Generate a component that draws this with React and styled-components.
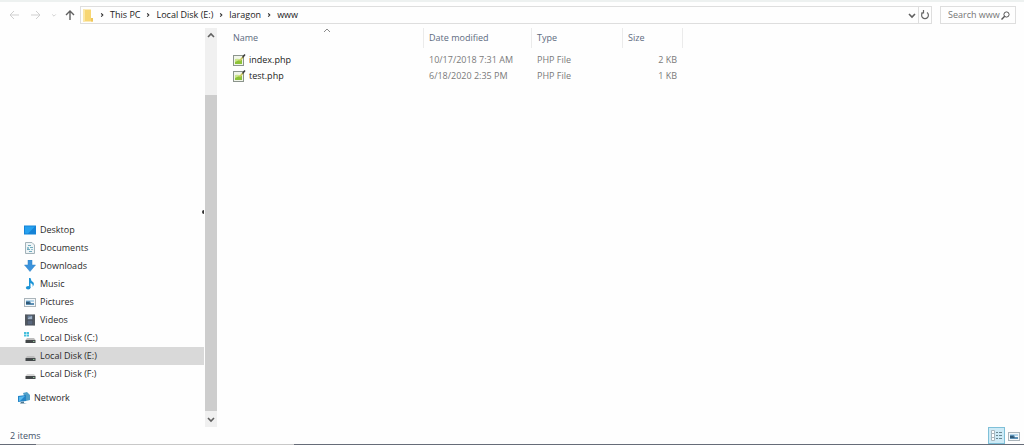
import React, { useState } from "react";
import styled, { createGlobalStyle } from "styled-components";

const GlobalStyle = createGlobalStyle`
  * {
    box-sizing: border-box;
  }

  body {
    margin: 0;
    background: #fefefe;
    color: #2b2b2b;
    font-family: "Open Sans", "Noto Sans", sans-serif;
    font-size: 9px;
    line-height: 16px;
  }

  button,
  input {
    font: inherit;
    color: inherit;
  }

  svg {
    display: block;
    flex: none;
  }
`;

const Window = styled.div`
  display: flex;
  flex-direction: column;
  height: 100vh;
  min-height: 320px;
  border-top: 2px solid #edf1f0;
  overflow: hidden;
`;

const Toolbar = styled.header`
  display: flex;
  align-items: center;
  height: 26px;
  padding: 0 8px;
`;

const IconButton = styled.button`
  display: flex;
  align-items: center;
  justify-content: center;
  width: 12px;
  height: 16px;
  padding: 0;
  border: none;
  background: transparent;
  color: ${(props) => (props.$faded ? "#cfcfcf" : "#606060")};
`;

const NavButtons = styled.nav`
  display: flex;
  gap: 10px;
  width: 72px;

  & button:nth-child(3) {
    margin: 0 -6px 0 -4px;
  }
`;

const AddressBar = styled.div`
  display: flex;
  align-items: center;
  flex: 1;
  height: 18px;
  padding-left: 2px;
  border: 1px solid #dedede;
`;

const Crumbs = styled.ol`
  display: flex;
  flex: 1;
  margin: 0 0 0 1px;
  padding: 0;
  list-style: none;

  & li {
    display: flex;
    align-items: center;
  }

  & svg {
    margin: 0 4px;
  }

  & a {
    color: #222;
    text-decoration: none;
  }
`;

const Refresh = styled.div`
  border-left: 1px solid #dedede;
`;

const SearchBox = styled.label`
  display: flex;
  align-items: center;
  width: 76px;
  height: 18px;
  margin-left: 8px;
  padding: 0 5px 0 7px;
  border: 1px solid #dedede;

  & input {
    flex: 1;
    min-width: 0;
    height: 16px;
    padding: 0;
    border: none;
    outline: none;
    background: transparent;
  }

  & input::placeholder {
    color: #757575;
    opacity: 1;
  }
`;

const Main = styled.div`
  display: flex;
  flex: 1;
  min-height: 0;
`;

const Sidebar = styled.nav`
  display: flex;
  flex-direction: column;
  justify-content: flex-end;
  width: 204px;
  padding-bottom: 20px;
  overflow: hidden;
`;

const Speck = styled.span`
  align-self: flex-end;
  width: 2px;
  height: 4px;
  margin-bottom: 7px;
  border-radius: 2px 0 0 2px;
  background: #333;
`;

const Place = styled.a`
  display: flex;
  align-items: center;
  gap: 4px;
  height: 18px;
  margin-top: ${(props) => (props.$top ? 6 : 0)}px;
  padding-left: ${(props) => (props.$top ? 18 : 24)}px;
  background: ${(props) => (props.$active ? "#d9d9d9" : "transparent")};
  color: #2b2b2b;
  text-decoration: none;
  white-space: nowrap;
`;

const Scrollbar = styled.div`
  display: flex;
  flex-direction: column;
  width: 12px;
  margin-left: 1px;
  background: #f0f0f0;
`;

const Thumb = styled.div`
  flex: 1;
  margin-top: 51px;
  background: #cdcdcd;
`;

const Files = styled.main`
  flex: 1;
  min-width: 0;
  padding-left: 13px;
`;

const Table = styled.table`
  width: 453px;
  table-layout: fixed;
  border-collapse: separate;
  border-spacing: 0;
`;

const HeadCell = styled.th`
  position: relative;
  width: ${(props) => props.$width}px;
  height: 20px;
  padding: 0 0 0 ${(props) => (props.$first ? 3 : 5)}px;
  border-right: 1px solid #ebebeb;
  color: #5d6b80;
  font-weight: 400;
  text-align: left;

  & svg {
    position: absolute;
    top: 0;
    left: 50%;
    transform: translateX(-50%);
    color: #8a8a8a;
  }
`;

const Cell = styled.td`
  height: 16px;
  padding: 0 6px 0 5px;
  color: #7a7a7a;
  text-align: ${(props) => (props.$right ? "right" : "left")};
  white-space: nowrap;

  tr:first-child > & {
    height: 20px;
    padding-top: 4px;
  }
`;

const FileName = styled.div`
  display: flex;
  align-items: center;
  gap: 3px;
  margin-left: -2px;
  color: #222;
`;

const StatusBar = styled.footer`
  display: flex;
  align-items: center;
  justify-content: space-between;
  height: 17px;
  padding: 0 2px 0 10px;
  color: #45536b;
`;

const Views = styled.div`
  display: flex;
`;

const ViewButton = styled.button`
  display: flex;
  align-items: center;
  justify-content: center;
  width: 17px;
  height: 17px;
  padding: 0;
  border: 1px solid ${(props) => (props.$active ? "#7fc0d8" : "transparent")};
  background: ${(props) => (props.$active ? "#cdeaf6" : "transparent")};
`;

const BottomEdge = styled.div`
  display: flex;
  height: 1px;
  background: #666c78;

  &::before {
    content: "";
    width: 258px;
    margin-left: 36px;
    background: #c8c8c8;
  }
`;

const paths = {
  left: "M10 5H1M5 1L1 5L5 9",
  right: "M0 5H9M5 1L9 5L5 9",
  up: "M5 10V1M1 5L5 1L9 5",
  next: "M4 3L6 5L4 7",
  down: "M2 4L5 7L8 4",
  above: "M2 6L5 3L8 6",
  sort: "M2 4L5 1L8 4",
};

function Line({ name, width = 1, size = 10 }) {
  return (
    <svg width={size} height={size} viewBox="0 0 10 10" fill="none">
      <path d={paths[name]} stroke="currentColor" strokeWidth={width} />
    </svg>
  );
}

function FolderIcon() {
  return (
    <svg width="10" height="13" viewBox="0 0 10 13">
      <path d="M0 .5H8V9H10V12.5H0Z" fill="#f7d673" />
      <path d="M0 .5H2V12.5H0Z" fill="#fbe7a6" />
      <path d="M8 9H10V12.5H8Z" fill="#efc65a" />
    </svg>
  );
}

function PhpIcon() {
  return (
    <svg width="13" height="13" viewBox="0 0 13 13">
      <rect x=".5" y="1.5" width="10" height="10" fill="#f1f5ea" stroke="#8b948c" />
      <path d="M2 5Q5 4 9 6V10H2Z" fill="#cbe58c" />
      <path d="M2 8Q5 6 9 6V10H2Z" fill="#8cc238" />
      <path d="M6.5 7L10 3" stroke="#c9c65a" strokeWidth="1.6" />
      <path d="M9.5 3.5L12 .5" stroke="#3d3d3d" strokeWidth="1.5" />
    </svg>
  );
}

function DiskBody({ light }) {
  return (
    <>
      <path d="M3 6H10L11.5 8H1.5Z" fill={light ? "#d6d6d6" : "#bdbdbd"} />
      <path d="M1.5 8H11.5V11H1.5Z" fill="#44484a" />
      <path d="M9 9.5H10.5" stroke="#8fbf97" />
    </>
  );
}

const drawings = {
  desktop: (
    <>
      <rect y="1.5" width="12" height="9" fill="#1583d6" />
      <path d="M1 2.5H11L4 9.5H1Z" fill="#27a1ef" />
    </>
  ),
  documents: (
    <>
      <path d="M1.5 .5H8L10.5 3V11.5H1.5Z" fill="#eef4f6" stroke="#a3b2b9" />
      <path d="M4 3.5H7M6 5.5H9M3 7.5H6M5 9.5H8" stroke="#6faabd" />
      <path d="M3 5H5V7H3ZM7 7H9V8H7Z" fill="#8fc1cf" />
    </>
  ),
  downloads: (
    <path d="M4 0H8V5H11.5L6 11.5L.5 5H4Z" fill="#3a92dc" stroke="#2f80c6" strokeWidth=".5" />
  ),
  music: (
    <>
      <path d="M5 0H6.5Q7 3 9 4Q11 6 8.5 9Q9.5 6 6.5 5V10H5Z" fill="#1b93d6" />
      <ellipse cx="4.2" cy="9.7" rx="2.3" ry="1.8" fill="#1b93d6" />
    </>
  ),
  pictures: (
    <>
      <rect x=".5" y="2.5" width="11" height="8" fill="#f4f8fa" stroke="#aab4ba" />
      <path d="M2 4H10V6H2Z" fill="#b5d6ea" />
      <path d="M2 5H6L7 7H10V9H2Z" fill="#5c8fb5" />
      <path d="M2 6H5L7 8H2Z" fill="#2f5977" />
    </>
  ),
  videos: (
    <>
      <rect x="1" y=".5" width="10" height="11" fill="#454b52" />
      <path d="M2 .5V11.5M10 .5V11.5" stroke="#7d858c" strokeDasharray="1 1" />
      <path d="M3.5 1.5H8.5V5.5H3.5Z" fill="#6c829c" />
      <path d="M3.5 6.5H8.5V10.5H3.5Z" fill="#59677d" />
      <path d="M4 4L8 2V5H4Z" fill="#9eb0c4" />
    </>
  ),
  windisk: (
    <>
      <DiskBody />
      <path d="M0 0H2V2H0ZM2.5 0H5V2H2.5ZM0 2.5H2V4.5H0ZM2.5 2.5H5V4.5H2.5Z" fill="#45bfdc" />
    </>
  ),
  disk: <DiskBody />,
  lightdisk: <DiskBody light />,
  network: (
    <>
      <path d="M5 1L9 0L12 3V8L8 9Z" fill="#4f9fc8" />
      <path d="M0 4L8 3V9L0 10Z" fill="#2384c6" />
      <path d="M1 5L7 4L2 9H1Z" fill="#56b8ee" />
      <path d="M3 10L6 9.5V11L9 11.5H2Z" fill="#4b7892" />
    </>
  ),
};

function PlaceIcon({ name }) {
  return (
    <svg width="12" height="12" viewBox="0 0 12 12">
      {drawings[name]}
    </svg>
  );
}

const crumbs = ["This PC", "Local Disk (E:)", "laragon", "www"];

const places = [
  { name: "Desktop", icon: "desktop" },
  { name: "Documents", icon: "documents" },
  { name: "Downloads", icon: "downloads" },
  { name: "Music", icon: "music" },
  { name: "Pictures", icon: "pictures" },
  { name: "Videos", icon: "videos" },
  { name: "Local Disk (C:)", icon: "windisk" },
  { name: "Local Disk (E:)", icon: "disk" },
  { name: "Local Disk (F:)", icon: "lightdisk" },
  { name: "Network", icon: "network", top: true },
];

const files = [
  { name: "index.php", date: "10/17/2018 7:31 AM", type: "PHP File", size: "2 KB" },
  { name: "test.php", date: "6/18/2020 2:35 PM", type: "PHP File", size: "1 KB" },
];

function App() {
  const [search, setSearch] = useState("");
  const [active, setActive] = useState("Local Disk (E:)");

  return (
    <>
      <GlobalStyle />
      <Window>
        <Toolbar>
          <NavButtons>
            <IconButton $faded aria-label="Back">
              <Line name="left" />
            </IconButton>
            <IconButton $faded aria-label="Forward">
              <Line name="right" />
            </IconButton>
            <IconButton $faded aria-label="Recent locations">
              <Line name="down" size={6} width={1.6} />
            </IconButton>
            <IconButton aria-label="Up">
              <Line name="up" width={1.4} />
            </IconButton>
          </NavButtons>
          <AddressBar>
            <FolderIcon />
            <Crumbs>
              {crumbs.map((crumb) => (
                <li key={crumb}>
                  <Line name="next" width={1.4} size={8} />
                  <a href="#">{crumb}</a>
                </li>
              ))}
            </Crumbs>
            <IconButton aria-label="Previous locations">
              <Line name="down" width={1.6} />
            </IconButton>
            <Refresh>
              <IconButton aria-label="Refresh">
                <svg width="10" height="10" viewBox="0 0 10 10" fill="none">
                  <path d="M7 2.5A3.4 3.4 0 1 1 3 2.5M3.5 0V3H1" stroke="#666" strokeWidth="1.2" />
                </svg>
              </IconButton>
            </Refresh>
          </AddressBar>
          <SearchBox>
            <input
              aria-label="Search www"
              placeholder="Search www"
              value={search}
              onChange={({ target }) => setSearch(target.value)}
            />
            <svg width="9" height="9" viewBox="0 0 9 9" fill="none">
              <circle cx="5.5" cy="3.5" r="2.6" stroke="#555" />
              <path d="M3.7 5.3L.5 8.5" stroke="#555" strokeWidth="1.4" />
            </svg>
          </SearchBox>
        </Toolbar>
        <Main>
          <Sidebar>
            <Speck />
            {places.map((place) => (
              <Place
                key={place.name}
                href="#"
                $top={place.top}
                $active={place.name === active}
                onClick={() => setActive(place.name)}
              >
                <PlaceIcon name={place.icon} />
                {place.name}
              </Place>
            ))}
          </Sidebar>
          <Scrollbar>
            <IconButton aria-label="Scroll up">
              <Line name="above" width={1.6} />
            </IconButton>
            <Thumb />
            <IconButton aria-label="Scroll down">
              <Line name="down" width={1.6} />
            </IconButton>
          </Scrollbar>
          <Files>
            <Table>
              <thead>
                <tr>
                  <HeadCell $width={194} $first>
                    Name
                    <Line name="sort" />
                  </HeadCell>
                  <HeadCell $width={108}>Date modified</HeadCell>
                  <HeadCell $width={91}>Type</HeadCell>
                  <HeadCell $width={60}>Size</HeadCell>
                </tr>
              </thead>
              <tbody>
                {files.map((file) => (
                  <tr key={file.name}>
                    <Cell>
                      <FileName>
                        <PhpIcon />
                        {file.name}
                      </FileName>
                    </Cell>
                    <Cell>{file.date}</Cell>
                    <Cell>{file.type}</Cell>
                    <Cell $right>{file.size}</Cell>
                  </tr>
                ))}
              </tbody>
            </Table>
          </Files>
        </Main>
        <StatusBar>
          <span>{files.length} items</span>
          <Views>
            <ViewButton $active aria-label="Details view">
              <svg width="13" height="13" viewBox="0 0 13 13" fill="none">
                <path d="M1.5 1.5H4.5V11.5H1.5Z" fill="#fff" stroke="#a9b7be" />
                <path d="M2 4.5H4M2 8.5H4" stroke="#a9b7be" />
                <path d="M6 3.5H8M9 3.5H12M6 6.5H8M9 6.5H12M6 9.5H8M9 9.5H12" stroke="#6b8791" />
              </svg>
            </ViewButton>
            <ViewButton aria-label="Large icons view">
              <PlaceIcon name="pictures" />
            </ViewButton>
          </Views>
        </StatusBar>
        <BottomEdge />
      </Window>
    </>
  );
}

export default App;
